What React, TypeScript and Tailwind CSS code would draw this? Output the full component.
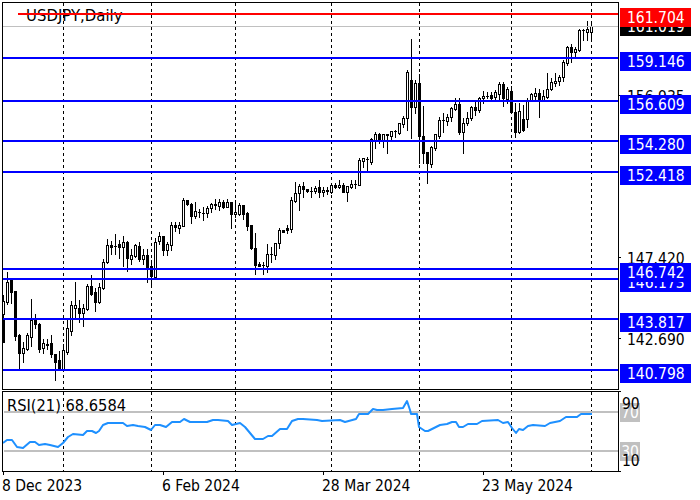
import React from 'react';

// [high, low, bodyTop, bodyBottom, white]
const C: [number, number, number, number, number][] = [
  [295,342,301,314,1],[272,304,282,302,1],[280,303,280,292,0],[291,340,291,336,0],[334,368,335,353,0],[342,362,348,353,1],[333,350,335,349,1],[299,346,320,337,1],
  [314,328,320,324,0],[323,352,324,349,0],[339,353,343,348,1],[339,349,344,345,1],[335,357,343,354,0],[354,380,354,362,0],[351,369,360,368,0],[344,370,350,369,1],
  [320,354,328,352,1],[301,335,305,331,1],[282,317,305,308,1],[300,322,308,313,0],[304,326,308,313,1],[284,310,286,309,1],[275,295,286,294,0],[288,311,292,302,0],
  [283,303,287,302,1],[259,289,262,288,1],[239,263,245,262,1],[241,254,245,247,0],[234,254,246,246,0],[240,258,244,247,0],[236,266,242,247,1],[241,271,242,258,0],
  [249,264,255,259,1],[244,257,245,256,1],[242,261,246,259,0],[249,264,255,259,1],[249,282,255,267,0],[260,287,266,276,0],[238,277,242,277,1],[232,244,236,241,1],
  [236,255,236,250,0],[242,255,244,250,1],[222,250,225,245,1],[222,231,225,227,0],[222,233,225,228,1],[198,226,200,226,1],[200,205,200,204,0],[203,223,204,216,0],
  [202,218,211,216,1],[209,217,212,212,0],[207,220,213,213,0],[206,217,208,213,1],[203,212,204,208,1],[199,209,204,205,0],[199,210,202,206,1],[200,208,202,207,0],
  [199,207,202,207,1],[202,228,202,214,0],[200,217,212,214,1],[203,215,205,214,1],[205,219,205,214,0],[212,230,213,226,0],[225,249,225,248,0],[233,274,248,265,0],
  [262,266,264,266,0],[262,274,265,265,0],[244,272,254,266,1],[247,262,254,254,0],[243,259,243,255,1],[228,248,230,243,1],[230,232,230,232,0],[225,233,228,230,0],
  [197,232,200,229,1],[182,202,193,201,1],[184,210,186,193,1],[182,197,186,189,0],[189,192,189,191,0],[187,197,191,191,0],[186,193,188,191,1],[180,197,187,192,0],
  [187,196,190,192,1],[187,194,190,191,1],[183,193,185,192,1],[183,188,185,187,0],[180,188,185,187,1],[183,192,185,192,0],[186,201,186,192,1],[180,188,184,187,1],
  [180,188,184,184,0],[158,185,160,185,1],[158,167,158,161,1],[157,170,159,159,0],[138,164,139,162,1],[132,148,134,140,1],[133,143,134,140,0],[134,147,134,140,1],
  [134,153,134,135,0],[131,139,131,136,1],[130,137,131,131,0],[123,134,123,133,1],[116,127,118,124,1],[70,130,72,118,1],[39,138,80,107,0],[80,113,83,107,1],
  [74,163,83,136,0],[106,163,136,153,0],[152,183,152,163,0],[146,167,147,164,1],[134,150,134,148,1],[117,138,120,136,1],[113,132,120,120,0],[114,125,117,121,1],
  [107,121,108,117,1],[98,110,104,109,1],[98,134,104,132,0],[118,153,123,132,1],[112,125,118,123,1],[106,120,107,118,1],[102,115,107,110,0],[97,112,98,110,1],
  [91,103,96,98,1],[92,98,96,96,0],[92,99,95,98,0],[90,101,92,97,1],[82,99,84,94,1],[82,106,84,98,0],[87,103,89,99,1],[86,113,91,112,0],
  [103,137,112,132,0],[103,133,111,132,1],[105,131,119,130,0],[98,127,100,119,1],[93,101,94,100,1],[88,100,93,96,1],[89,117,93,100,0],[90,101,96,100,1],
  [73,98,89,97,1],[78,90,82,89,1],[73,86,81,83,1],[75,85,77,81,1],[60,81,62,77,1],[46,65,47,63,1],[44,62,47,52,0],[47,57,49,52,1],
  [29,51,30,50,1],[29,40,30,30,0],[21,40,29,32,1],[21,40,26,32,1],
];

const rsi = '3,443 7,440 12,440 17,447 23,448 30,442 35,442 39,445 45,444 50,445 58,447 63,443 68,437 73,434 83,435 87,431 92,431 96,433 99,431 103,425 108,423 123,423 127,426 133,425 138,426 145,427 151,430 155,425 160,425 166,427 172,422 180,422 184,419 190,422 207,422 213,420 218,420 228,421 232,425 240,423 245,427 250,433 255,439 263,439 268,436 272,436 280,429 287,429 292,421 298,419 303,419 317,420 322,421 340,420 345,422 356,419 359,414 368,414 373,409 377,410 383,410 392,409 403,408 407,401 410,410 411,414 417,414 419,427 425,431 428,431 440,425 447,424 452,422 456,422 459,427 463,427 468,424 477,424 482,421 498,420 503,423 508,422 512,428 516,433 519,429 523,430 528,426 533,425 545,426 550,423 560,421 566,417 577,417 581,414 592,414';

const dashes = [63, 151, 235, 331, 419, 511, 591];
const blue = [58, 101, 141, 172, 269, 279, 319, 370];

const prices = [
  { text: '161.019', top: 17, cls: 'bg-black text-white' },
  { text: '161.704', top: 8, cls: 'bg-[#ff0000] text-white' },
  { text: '159.146', top: 52, cls: 'bg-[#0000ff] text-white' },
  { text: '156.935', top: 87, cls: 'text-black' },
  { text: '156.609', top: 95, cls: 'bg-[#0000ff] text-white' },
  { text: '154.280', top: 135, cls: 'bg-[#0000ff] text-white' },
  { text: '152.418', top: 166, cls: 'bg-[#0000ff] text-white' },
  { text: '147.420', top: 249, cls: 'text-black' },
  { text: '146.173', top: 273, cls: 'bg-[#0000ff] text-white' },
  { text: '146.742', top: 263, cls: 'bg-[#0000ff] text-white' },
  { text: '143.817', top: 313, cls: 'bg-[#0000ff] text-white' },
  { text: '142.690', top: 330, cls: 'text-black' },
  { text: '140.798', top: 364, cls: 'bg-[#0000ff] text-white' },
];

const ticks = [95, 257, 338];
const dates = ['8 Dec 2023', '6 Feb 2024', '28 Mar 2024', '23 May 2024'];

export default function App() {
  return (
    <div className="w-[700px] h-[500px] bg-white pt-[2px] pl-[2px] overflow-hidden text-black text-[15.5px] leading-[21px] font-['DejaVu_Sans_Condensed','DejaVu_Sans',sans-serif]">
      <div className="flex h-[388px]">
        <div className="relative w-[617px] border border-black">
          <svg width="615" height="386" viewBox="3 3 615 386" shapeRendering="crispEdges" className="block">
            {dashes.map(x => (
              <line key={x} x1={x + 0.5} x2={x + 0.5} y1="3" y2="389" stroke="#000" strokeDasharray="3 3" />
            ))}
            <rect x="3" y="318" width="2" height="25" fill="#000" />
            {C.map(([h, l, t, b, w], i) => {
              const x = 3 + i * 4;
              return (
                <g key={i}>
                  <rect x={x} y={h} width="1" height={l - h + 1} fill="#000" />
                  <rect x={x - 1} y={t} width="3" height={b - t + 1} fill="#000" />
                  {w === 1 && b - t > 1 && <rect x={x} y={t + 1} width="1" height={b - t - 1} fill="#fff" />}
                </g>
              );
            })}
            <rect x="3" y="26" width="615" height="1" fill="#c0c0c0" />
            {blue.map(y => (
              <rect key={y} x="3" y={y - 1} width="615" height="2" fill="#0000ff" />
            ))}
          </svg>
          <span className="absolute left-[23px] top-[2px] text-[16.6px]">USDJPY,Daily</span>
          <div className="absolute left-[15px] right-0 top-[10px] h-[2px] bg-[#ff0000]" />
        </div>
        <div className="relative w-[81px]">
          {ticks.map(y => (
            <div key={y} className="absolute left-0 w-[2px] h-px bg-black" style={{ top: y - 2 }} />
          ))}
          {prices.map(p => (
            <div key={p.text} className={`absolute left-[1px] w-[71px] h-[19px] pl-[7px] ${p.cls}`} style={{ top: p.top - 2 }}>
              {p.text}
            </div>
          ))}
        </div>
      </div>
      <div className="flex h-[81px] mt-[1px]">
        <div className="relative w-[617px] border border-black">
          <svg width="615" height="79" viewBox="3 392 615 79" shapeRendering="crispEdges" className="block">
            {dashes.map(x => (
              <line key={x} x1={x + 0.5} x2={x + 0.5} y1="392" y2="471" stroke="#000" strokeDasharray="3 3" />
            ))}
            <rect x="4" y="411" width="614" height="2" fill="#c0c0c0" />
            <rect x="4" y="450" width="614" height="2" fill="#c0c0c0" />
            <polyline points={rsi} fill="none" stroke="#1e90ff" strokeWidth="2" shapeRendering="auto" strokeLinejoin="round" />
          </svg>
          <span className="absolute left-[4px] top-[3px] text-[16.3px]">RSI(21) 68.6584</span>
        </div>
        <div className="relative w-[81px]">
          <div className="absolute left-[1px] top-[12px] w-[20px] h-[19px] bg-[#c0c0c0] text-white text-center">70</div>
          <div className="absolute left-[1px] top-[51px] w-[20px] h-[19px] bg-[#c0c0c0] text-white text-center">30</div>
          <span className="absolute left-[3px] top-[3px]">90</span>
          <span className="absolute left-[3px] top-[60px]">10</span>
          <div className="absolute left-0 top-0 w-[2px] h-px bg-black" />
          <div className="absolute left-0 bottom-0 w-[2px] h-px bg-black" />
        </div>
      </div>
      <div className="grid grid-cols-[160px_160px_160px_160px]">
        {dates.map(d => (
          <div key={d}>
            <div className="ml-px w-px h-[3px] bg-black" />
            <div className="mt-[1px] whitespace-nowrap">{d}</div>
          </div>
        ))}
      </div>
    </div>
  );
}
